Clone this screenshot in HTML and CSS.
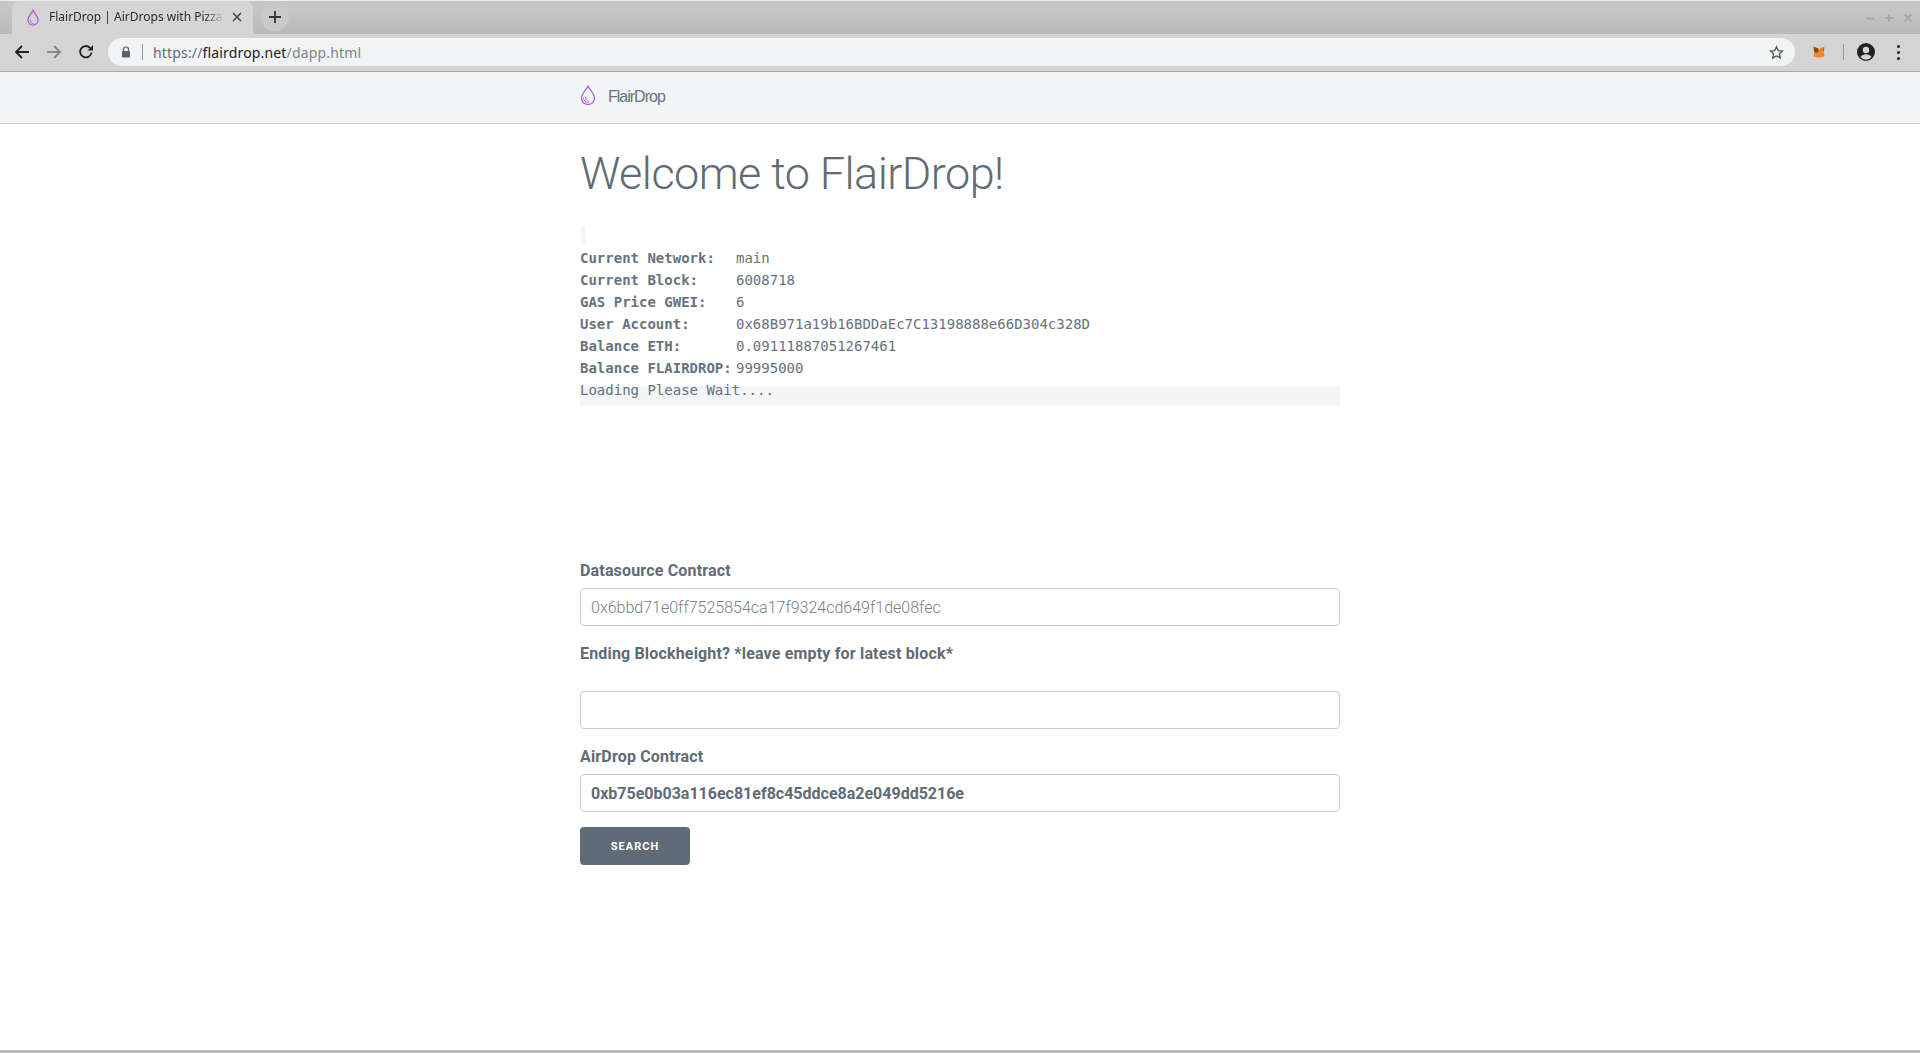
FILE: index.html
```html
<!DOCTYPE html>
<html lang="en">
<head>
<meta charset="utf-8">
<title>FlairDrop | AirDrops with Pizzazz</title>
<link rel="stylesheet" href="styles.css">
</head>
<body>
<div class="browser">
  <div class="tabstrip">
    <div class="tab">
      <svg class="favicon" viewBox="0 0 16 20" width="14" height="17"><path d="M8 1.5C6.5 5 2 8.5 2 13a6 6 0 0 0 12 0C14 8.5 9.500 5 8 1.500Z" fill="none" stroke="#a55fd6" stroke-width="1.400"/><path d="M4.500 12.500c0 3 2 4.800 4.500 5" fill="none" stroke="#a55fd6" stroke-width="1"/></svg>
      <span class="tab-title">FlairDrop | AirDrops with Pizza</span>
      <svg class="tab-close" viewBox="0 0 10 10" width="10" height="10"><path d="M1 1l8 8M9 1l-8 8" stroke="#444" stroke-width="1.500"/></svg>
    </div>
    <div class="newtab"><svg viewBox="0 0 14 14" width="14" height="14"><path d="M7 1v12M1 7h12" stroke="#333" stroke-width="1.800"/></svg></div>
    <div class="winctl">
      <svg viewBox="0 0 10 10" width="10" height="10"><path d="M1 5.500h8" stroke="#a8a8a8" stroke-width="2"/></svg>
      <svg viewBox="0 0 10 10" width="10" height="10"><path d="M1 5h8M5 1v8" stroke="#a8a8a8" stroke-width="2"/></svg>
      <svg viewBox="0 0 10 10" width="10" height="10"><path d="M1.500 1.500l7 7M8.500 1.500l-7 7" stroke="#a8a8a8" stroke-width="2"/></svg>
    </div>
  </div>
  <div class="toolbar">
    <svg class="tool" viewBox="0 0 16 16" width="16" height="16"><path d="M15 8H2M8 2L2 8l6 6" fill="none" stroke="#222" stroke-width="1.800"/></svg>
    <svg class="tool" viewBox="0 0 16 16" width="16" height="16"><path d="M1 8h13M8 2l6 6-6 6" fill="none" stroke="#888" stroke-width="1.800"/></svg>
    <svg class="tool" viewBox="0 0 16 16" width="16" height="16"><path d="M13.500 8.500A5.700 5.700 0 1 1 12 3.800" fill="none" stroke="#222" stroke-width="1.800"/><path d="M9.500 6.500H15V1Z" fill="#222"/></svg>
    <div class="omnibox">
      <svg class="lock" viewBox="0 0 10 12" width="10" height="12"><path d="M2.500 5V3.500a2.500 2.500 0 0 1 5 0V5" fill="none" stroke="#5f6368" stroke-width="1.200"/><rect x="1" y="5" width="8" height="6.500" rx="1" fill="#5f6368"/></svg>
      <span class="omni-sep"></span>
      <span class="url"><span class="url-dim">https://</span><span class="url-host">flairdrop.net</span><span class="url-dim2">/dapp.html</span></span>
      <svg class="star" viewBox="0 0 16 16" width="15" height="15"><path d="M8 1.800l1.900 4.100 4.500.5-3.300 3 .9 4.400L8 11.600l-4 2.200.9-4.400-3.300-3 4.500-.5Z" fill="none" stroke="#555" stroke-width="1.400"/></svg>
    </div>
    <svg class="fox" viewBox="0 0 12 12" width="12" height="12"><path d="M.5.500L5 2.500h2L11.500.500 11 7l.5 3.500-3.500 1H4l-3.500-1L1 7Z" fill="#f0862a"/><path d="M.8.800L5 2.500 5.500 6 2.500 7 1 5Z" fill="#7d4a22"/><path d="M10 2l1-1v4l-1.500-.5Z" fill="#b5651d"/></svg>
    <span class="tool-sep"></span>
    <svg class="avatar" viewBox="0 0 18 18" width="18" height="18"><circle cx="9" cy="9" r="9" fill="#222"/><circle cx="9" cy="7" r="3.200" fill="#d4d4d4"/><path d="M3.500 14c1.200-2 3.500-2.800 5.500-2.800s4.300.8 5.500 2.800a7 7 0 0 1-11 0Z" fill="#d4d4d4"/></svg>
    <div class="kebab"><i></i><i></i><i></i></div>
  </div>
</div>
<nav class="navbar">
  <div class="container nav-inner">
    <svg class="logo" viewBox="0 0 16 20" width="16" height="20"><path d="M8 1C6.500 4.800 1.500 8.500 1.500 13a6.500 6.500 0 0 0 13 0C14.500 8.500 9.500 4.800 8 1Z" fill="none" stroke="#a55fd6" stroke-width="1.200"/><path d="M3.500 12.500c0 3 2.200 5.300 5 5.500M5.500 12c0 2.500 1.500 4 3.500 4.300" fill="none" stroke="#a55fd6" stroke-width=".9"/></svg>
    <span class="brand">FlairDrop</span>
  </div>
</nav>
<main class="content">
  <div class="container">
    <h1 class="title">Welcome to FlairDrop!</h1>
    <div class="empty-code"></div>
    <table class="stats">
      <tr><th>Current Network:</th><td>main</td></tr>
      <tr><th>Current Block:</th><td>6008718</td></tr>
      <tr><th>GAS Price GWEI:</th><td>6</td></tr>
      <tr><th>User Account:</th><td>0x68B971a19b16BDDaEc7C13198888e66D304c328D</td></tr>
      <tr><th>Balance ETH:</th><td>0.09111887051267461</td></tr>
      <tr><th>Balance FLAIRDROP:</th><td>99995000</td></tr>
    </table>
    <div class="loading">Loading Please Wait....</div>
    <form class="form">
      <label class="label" for="ds">Datasource Contract</label>
      <input class="input" id="ds" type="text" placeholder="0x6bbd71e0ff7525854ca17f9324cd649f1de08fec">
      <label class="label label-tall" for="end">Ending Blockheight? *leave empty for latest block*</label>
      <input class="input" id="end" type="text">
      <label class="label label-next" for="ad">AirDrop Contract</label>
      <input class="input strong" id="ad" type="text" value="0xb75e0b03a116ec81ef8c45ddce8a2e049dd5216e">
      <button class="btn" type="button">SEARCH</button>
    </form>
  </div>
</main>
<div class="bottom-edge"></div>
</body>
</html>
```
FILE: styles.css
```css
* { box-sizing: border-box; }
html, body { margin: 0; height: 1053px; overflow: hidden; }
body { display: flex; flex-direction: column; background: #fff; font-family: Roboto, sans-serif; color: #5f6b76; }

.browser { flex: none; height: 72px; border-bottom: 1px solid #a9a9a9; background: #d4d4d4; }
.tabstrip { height: 34px; display: flex; align-items: flex-end; padding-left: 12px; background: linear-gradient(#c8c8c8, #c4c4c4 30%, #bababa); border-top: 1px solid #ececec; }
.tab { width: 241px; height: 33px; background: #d5d5d5; border-radius: 8px 8px 0 0; display: flex; align-items: center; padding: 0 11px 1px 14px; }
.favicon { flex: none; margin-right: 9px; }
.tab-title { flex: 1; min-width: 0; margin-bottom: 2px; font: 12px "Noto Sans", sans-serif; color: #2b2b2b; white-space: nowrap; -webkit-mask-image: linear-gradient(to right, #000 88%, transparent 99%); mask-image: linear-gradient(to right, #000 88%, transparent 99%); }
.tab-close { flex: none; margin-left: 6px; }
.newtab { width: 28px; height: 28px; margin: 0 0 2px 8px; border-radius: 50%; background: #c9c9c9; display: flex; align-items: center; justify-content: center; align-self: center; }
.winctl { margin-left: auto; margin-right: 7px; display: flex; gap: 9px; align-self: center; }

.toolbar { height: 37px; display: flex; align-items: center; padding: 0 0 1px 14px; }
.tool { flex: none; margin-right: 16px; }
.tool:nth-child(3) { margin-right: 14px; }
.omnibox { flex: 1; height: 28px; background: #f1f3f4; border-radius: 14px; display: flex; align-items: center; padding: 0 11px 0 13px; }
.lock { flex: none; }
.omni-sep { width: 1px; height: 16px; background: #9a9a9a; margin: 0 10px 0 11px; }
.url { flex: 1; font: 14px "Noto Sans", sans-serif; letter-spacing: 0.16px; white-space: nowrap; }
.url-dim { color: #5e6d7d; }
.url-host { color: #202124; }
.url-dim2 { color: #80868b; }
.fox { flex: none; margin: 0 0 0 18px; }
.tool-sep { width: 1px; height: 16px; background: #9a9a9a; margin: 0 13px 0 18px; }
.avatar { flex: none; }
.kebab { width: 3px; margin: 0 20px 0 22px; display: flex; flex-direction: column; gap: 3px; }
.kebab i { display: block; width: 3px; height: 3px; background: #222; border-radius: 50%; }

.navbar { flex: none; height: 52px; background: #f4f5f7; border-bottom: 1px solid #cfcfcf; }
.container { width: 760px; margin: 0 auto; }
.nav-inner { height: 51px; display: flex; align-items: center; }
.logo { flex: none; margin: 0 12px 5px 0; }
.brand { font: 16px "Liberation Sans", sans-serif; letter-spacing: -1px; color: #66727e; margin-bottom: 2px; }

.content { flex: 1; }
.title { margin: 23px 0 0; font: 300 45px/1.2 Roboto, sans-serif; color: #5f6b76; letter-spacing: -0.55px; height: 54px; }
.empty-code { width: 5px; height: 20px; margin: 24px 0 0 1px; background: #f4f5f7; border-radius: 2px; }
.stats { border-collapse: collapse; font: 14px/22px "DejaVu Sans Mono", monospace; margin-top: 2px; color: #66727e; }
.stats th { padding: 0 4px 0 0; width: 156px; text-align: left; font-weight: bold; white-space: nowrap; }
.stats td { padding: 0; white-space: nowrap; }
.loading { font: 14px/20px "DejaVu Sans Mono", monospace; height: 26px; margin-top: 1px; background: linear-gradient(#fff 6px, #f4f5f7 6px); color: #66727e; }

.form { margin-top: 155px; display: flex; flex-direction: column; align-items: flex-start; }
.label { font: bold 16px/19px Roboto, sans-serif; letter-spacing: 0.17px; color: #5f6b76; margin-bottom: 8px; }
.label-tall { margin-top: 18px; margin-bottom: 28px; }
.label-next { margin-top: 18px; }
.input { width: 100%; height: 38px; border: 1px solid #cccccc; border-radius: 4px; padding: 0 10px; font: 300 16px Roboto, sans-serif; color: #5f6b76; background: #fff; outline: none; }
.input::placeholder { color: #75808a; opacity: 1; }
.input.strong { font-weight: bold; color: #5f6b76; }
.btn { width: 110px; height: 38px; margin-top: 15px; border: 0; border-radius: 4px; background: #5f6b76; color: #fff; font: bold 11px Roboto, sans-serif; letter-spacing: 1px; }

.bottom-edge { flex: none; height: 3px; background: linear-gradient(#d8d8d8, #a8a8a8 40%, #c8c8c8); }
```
